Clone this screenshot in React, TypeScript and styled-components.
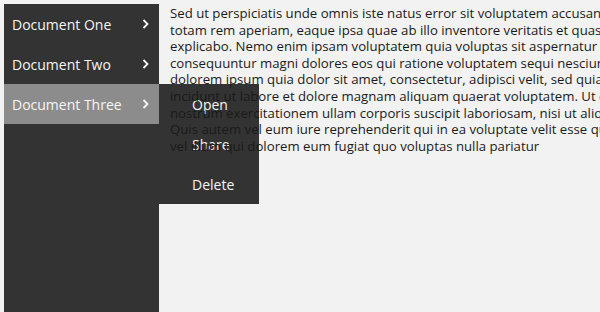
import styled, { createGlobalStyle } from 'styled-components'

const GlobalStyle = createGlobalStyle`
  html, body {
    margin: 0;
    padding: 0;
    background: #f2f2f2;
    overflow: hidden;
  }
  body {
    font-family: "Open Sans", "Noto Sans", sans-serif;
  }
`

const Page = styled.div`
  display: flex;
  align-items: flex-start;
  padding: 4px 0 0 4px;
  height: 100vh;
  box-sizing: border-box;
`

const Sidebar = styled.nav`
  position: relative;
  flex: 0 0 155px;
  align-self: stretch;
  background: #333333;
  z-index: 1;
`

const NavItem = styled.div<{ $active?: boolean }>`
  display: flex;
  align-items: center;
  justify-content: space-between;
  height: 40px;
  padding: 0 10px 0 8px;
  font-size: 14px;
  color: #f5f5f5;
  background: ${({ $active }) => ($active ? '#8c8c8c' : 'transparent')};
`

const Flyout = styled.div`
  position: absolute;
  left: 155px;
  top: 80px;
  width: 100px;
  background: #333333;
  display: flex;
  flex-direction: column;
`

const FlyoutItem = styled.div`
  height: 40px;
  display: flex;
  align-items: center;
  padding-left: 33px;
  font-size: 14px;
  color: #f5f5f5;
`

const Content = styled.div`
  position: relative;
  z-index: 2;
  flex: 1;
  min-width: 0;
  overflow: hidden;
  padding: 1px 0 0 11px;
  font-size: 13.2px;
  line-height: 16.6px;
  color: #1a1a1a;
`

const Line = styled.div`
  white-space: nowrap;
`

function Chevron() {
  return (
    <svg width="7" height="10" viewBox="0 0 7 10">
      <polyline points="1.5,1 5.5,5 1.5,9" fill="none" stroke="#f5f5f5" strokeWidth="1.8" />
    </svg>
  )
}

const docs = ['Document One', 'Document Two', 'Document Three']
const actions = ['Open', 'Share', 'Delete']

const lines = [
  'Sed ut perspiciatis unde omnis iste natus error sit voluptatem accusantium doloremque laudantium,',
  'totam rem aperiam, eaque ipsa quae ab illo inventore veritatis et quasi architecto beatae vitae dicta sunt',
  'explicabo. Nemo enim ipsam voluptatem quia voluptas sit aspernatur aut odit aut fugit, sed quia',
  'consequuntur magni dolores eos qui ratione voluptatem sequi nesciunt. Neque porro quisquam est, qui',
  'dolorem ipsum quia dolor sit amet, consectetur, adipisci velit, sed quia non numquam eius modi tempora',
  'incidunt ut labore et dolore magnam aliquam quaerat voluptatem. Ut enim ad minima veniam, quis',
  'nostrum exercitationem ullam corporis suscipit laboriosam, nisi ut aliquid ex ea commodi consequatur?',
  'Quis autem vel eum iure reprehenderit qui in ea voluptate velit esse quam nihil molestiae consequatur,',
  'vel illum qui dolorem eum fugiat quo voluptas nulla pariatur',
]

export default function App() {
  return (
    <>
      <GlobalStyle />
      <Page>
        <Sidebar>
          {docs.map((d, i) => (
            <NavItem key={d} $active={i === 2}>
              <span>{d}</span>
              <Chevron />
            </NavItem>
          ))}
          <Flyout>
            {actions.map((a) => (
              <FlyoutItem key={a}>{a}</FlyoutItem>
            ))}
          </Flyout>
        </Sidebar>
        <Content>
          {lines.map((l) => (
            <Line key={l}>{l}</Line>
          ))}
        </Content>
      </Page>
    </>
  )
}
